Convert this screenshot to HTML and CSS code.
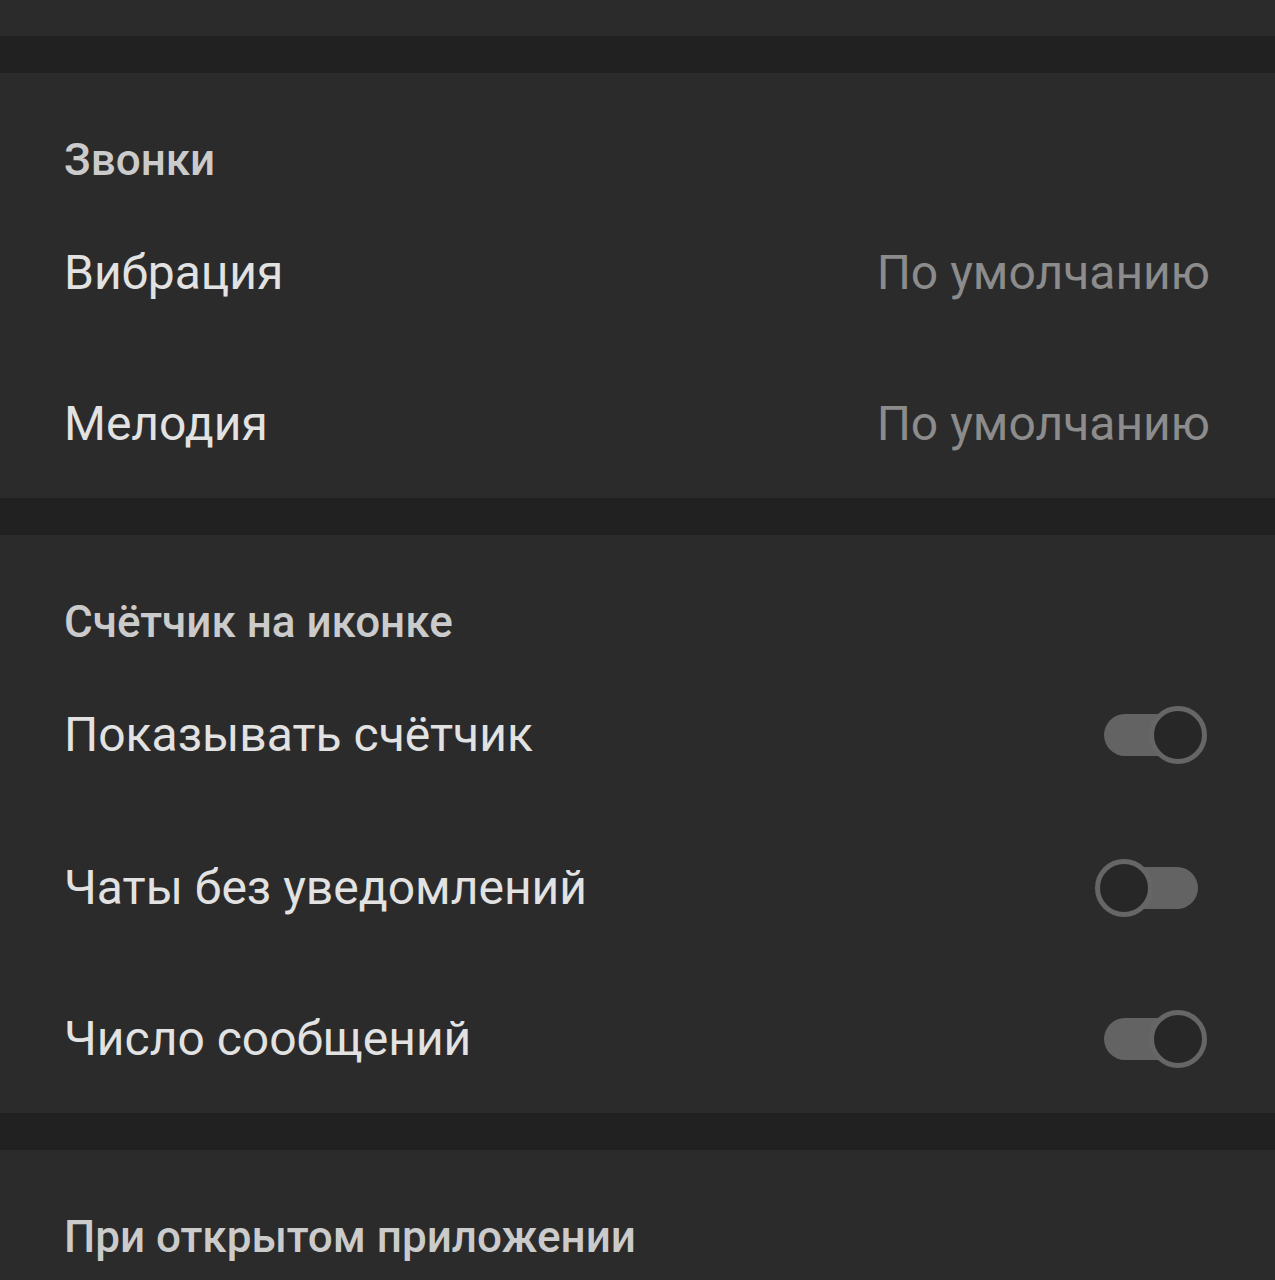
FILE: index.html
```html
<!DOCTYPE html>
<html lang="ru">
<head>
    <meta charset="UTF-8">
    <meta name="viewport" content="width=device-width, initial-scale=1.0">
    <title>Уведомления</title>
    <link rel="stylesheet" href="styles.css">
</head>
<body>

<div class="panel panel-top"></div>

<!-- Calls -->
<div class="panel">
    <div class="section-title">Звонки</div>
    <div class="row">
        <span class="row-label">Вибрация</span>
        <span class="row-value">По умолчанию</span>
    </div>
    <div class="row">
        <span class="row-label">Мелодия</span>
        <span class="row-value">По умолчанию</span>
    </div>
</div>

<!-- Icon badge -->
<div class="panel">
    <div class="section-title">Счётчик на иконке</div>
    <div class="row">
        <span class="row-label">Показывать счётчик</span>
        <span class="switch on"><span class="knob"></span></span>
    </div>
    <div class="row">
        <span class="row-label">Чаты без уведомлений</span>
        <span class="switch"><span class="knob"></span></span>
    </div>
    <div class="row">
        <span class="row-label">Число сообщений</span>
        <span class="switch on"><span class="knob"></span></span>
    </div>
</div>

<div class="panel panel-last">
    <div class="section-title">При открытом приложении</div>
</div>

</body>
</html>
```

FILE: styles.css
```css
body {
    margin: 0;
    padding: 0;
    background-color: #212121;
    font-family: Roboto, "Noto Sans", sans-serif;
    color: #e2e2e2;
    display: flex;
    flex-direction: column;
    gap: 37px;
}

.panel {
    background-color: #2b2b2b;
    padding: 0 65px 0 64px;
}

.panel-top {
    height: 36px;
}

.panel-last {
    height: 130px;
    overflow: hidden;
}

.section-title {
    height: 123px;
    padding-top: 50px;
    box-sizing: border-box;
    font-size: 44px;
    font-weight: 500;
    line-height: 74px;
    color: #cbcbcb;
}

.row {
    display: flex;
    align-items: center;
    justify-content: space-between;
    height: 153px;
}

.row:last-child {
    height: 149px;
    padding-bottom: 0;
}

.row-label {
    font-size: 48px;
}

.row-value {
    font-size: 48px;
    color: #8c8c8c;
}

/* toggle switch */
.switch {
    position: relative;
    width: 94px;
    height: 42px;
    margin-right: 12px;
    border-radius: 21px;
    background-color: #636363;
}

.switch .knob {
    position: absolute;
    top: -8px;
    left: -9px;
    width: 48px;
    height: 48px;
    border-radius: 50%;
    border: 5px solid #666;
    background-color: #272727;
}

.switch.on .knob {
    left: auto;
    right: -9px;
}
```
